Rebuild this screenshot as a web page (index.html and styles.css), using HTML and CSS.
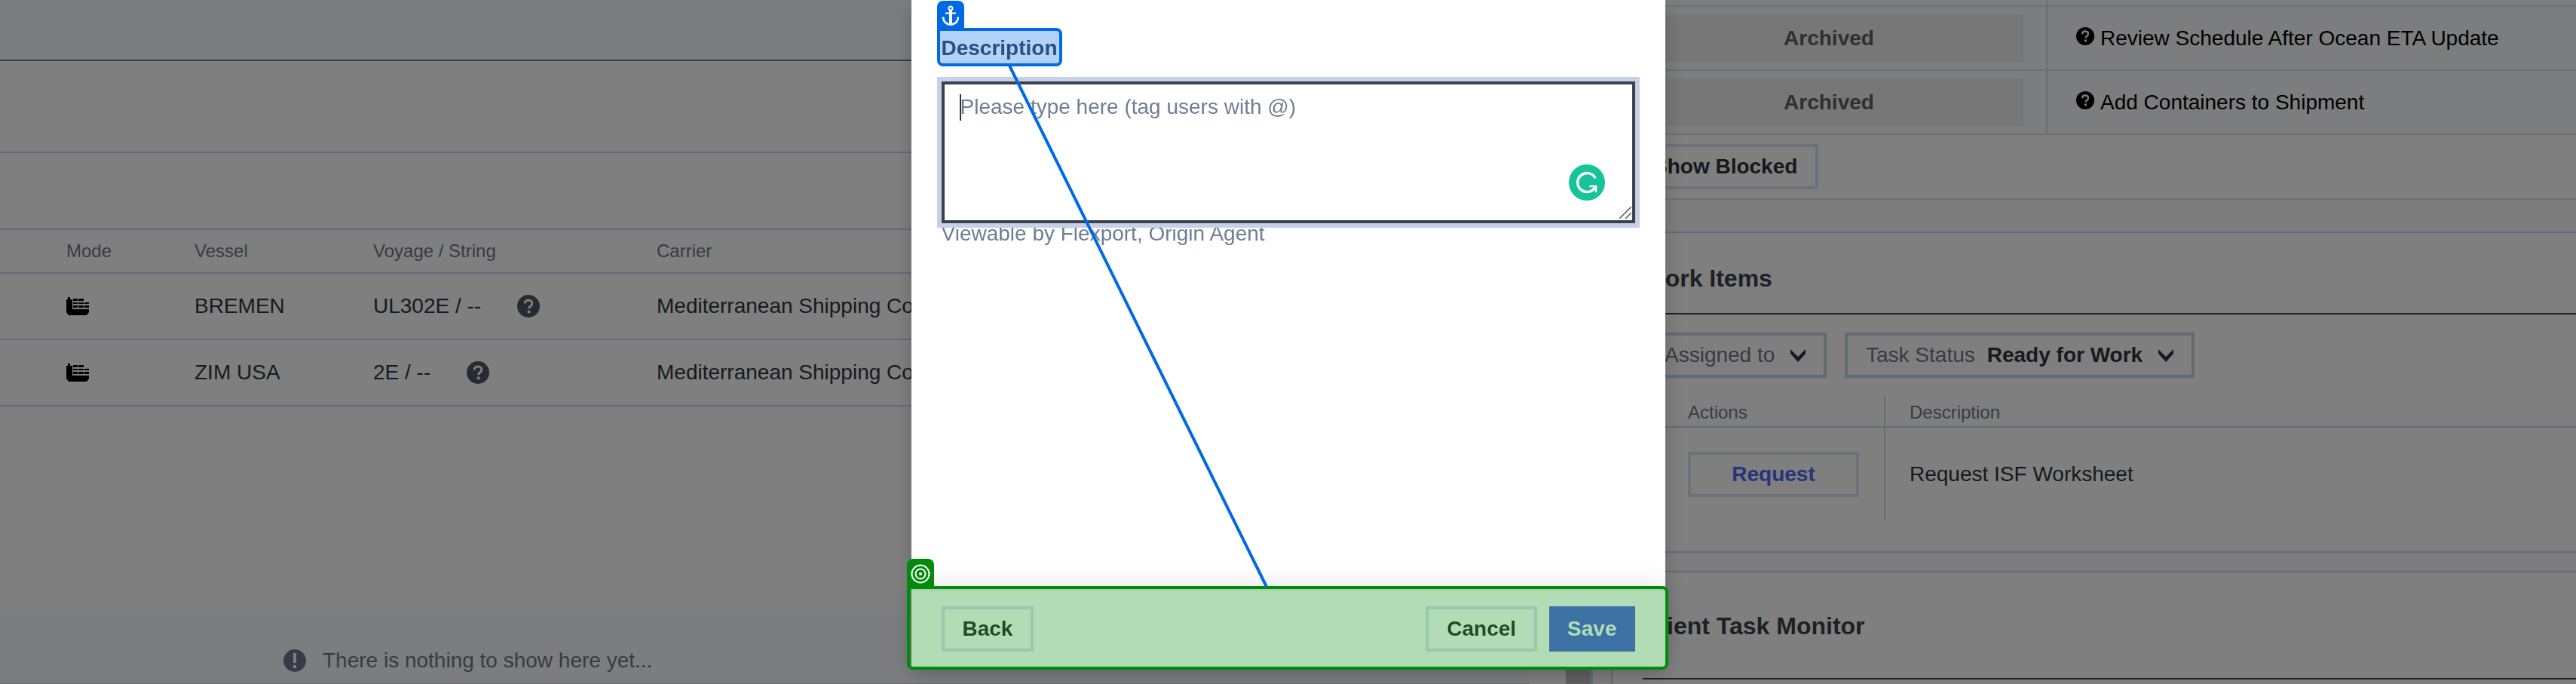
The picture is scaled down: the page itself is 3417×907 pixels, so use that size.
FILE: index.html
```html
<!DOCTYPE html>
<html lang="en">
<head>
<meta charset="utf-8">
<title>Shipment</title>
<link rel="stylesheet" href="styles.css">
</head>
<body>
<svg class="defs" aria-hidden="true">
  <symbol id="help" viewBox="0 0 30 30">
    <circle cx="15" cy="15" r="15" fill="currentColor"/>
    <path d="M10.2 11.6c0-2.9 2-4.7 4.8-4.7s4.9 1.700 4.900 4.300c0 3.500-4.200 3.600-4.200 7" fill="none" stroke="#fff" stroke-width="3"/>
    <path d="M13.800 20.600h3.600v3.600h-3.600z" fill="#fff"/>
  </symbol>
  <symbol id="alert" viewBox="0 0 30 30">
    <circle cx="15" cy="15" r="15" fill="currentColor"/>
    <path d="M13 5h4v13h-4zM13 21h4v4h-4z" fill="#f8fafc"/>
  </symbol>
  <symbol id="ship" viewBox="0 0 30 24">
    <path d="M0 3h2V0h3v3h3v13h22v4l-3 4H3l-3-4z"/>
    <path d="M9 2h6v3h-6zM16 2h7v3h-7zM9 7h6v2h-6zM16 7h7v2h-7zM24 7h6v2h-6zM9 11h6v3h-6zM16 11h7v3h-7zM24 11h6v3h-6z"/>
  </symbol>
  <symbol id="chevron" viewBox="0 0 20 17">
    <path d="M0 4.500V0l10 10L20 0v6L10 17 0 6z" fill="currentColor"/>
  </symbol>
</svg>

<main class="page">
  <section class="shipment">
    <div class="content">
      <div class="summary"></div>
      <div class="toolbar"></div>
      <div class="subbar"></div>
      <table class="legs">
        <colgroup><col class="col-mode"><col class="col-vessel"><col class="col-voyage"><col></colgroup>
        <thead>
          <tr><th>Mode</th><th>Vessel</th><th>Voyage / String</th><th>Carrier</th></tr>
        </thead>
        <tbody>
          <tr>
            <td><svg class="ship" role="img" aria-label="Ocean"><use href="#ship"/></svg></td>
            <td>BREMEN</td>
            <td><span class="voyage">UL302E / -- <svg class="icon"><use href="#help"/></svg></span></td>
            <td>Mediterranean Shipping Company</td>
          </tr>
          <tr>
            <td><svg class="ship" role="img" aria-label="Ocean"><use href="#ship"/></svg></td>
            <td>ZIM USA</td>
            <td><span class="voyage">2E / -- <svg class="icon"><use href="#help"/></svg></span></td>
            <td>Mediterranean Shipping Company</td>
          </tr>
        </tbody>
      </table>
      <div class="empty"><svg class="icon"><use href="#alert"/></svg>There is nothing to show here yet...</div>
    </div>
    <div class="track"></div>
  </section>

  <aside class="side">
    <section class="panel tasks">
      <table class="archived">
        <colgroup><col class="col-state"><col></colgroup>
        <tbody>
          <tr class="cut"><td></td><td></td></tr>
          <tr><td><div class="pill">Archived</div></td><td><svg class="small-icon"><use href="#help"/></svg>Review Schedule After Ocean ETA Update</td></tr>
          <tr><td><div class="pill">Archived</div></td><td><svg class="small-icon"><use href="#help"/></svg>Add Containers to Shipment</td></tr>
        </tbody>
      </table>
      <div class="tasks-foot"><button class="btn" type="button">Show Blocked</button></div>
    </section>

    <section class="panel work">
      <h2 class="title">Work Items</h2>
      <div class="filters">
        <div class="filter">
          <select class="muted" aria-label="Assigned to"><option>Assigned to</option></select>
          <svg class="chevron"><use href="#chevron"/></svg>
        </div>
        <div class="filter">
          <label for="status">Task Status</label>
          <select id="status" class="strong"><option>Ready for Work</option></select>
          <svg class="chevron"><use href="#chevron"/></svg>
        </div>
      </div>
      <table class="items">
        <colgroup><col class="col-actions"><col></colgroup>
        <thead><tr><th>Actions</th><th>Description</th></tr></thead>
        <tbody><tr><td><button class="btn request" type="button">Request</button></td><td>Request ISF Worksheet</td></tr></tbody>
      </table>
    </section>

    <section class="panel monitor">
      <h2 class="title">Client Task Monitor</h2>
    </section>
  </aside>
</main>

<div class="backdrop">
  <div class="modal" role="dialog" aria-label="Description">
    <div class="modal-body">
      <div class="marked">
        <label class="field-label" for="description">Description</label>
        <div class="mark anchor">
          <span class="tab"><svg width="24" height="28" viewBox="0 0 24 28" fill="none" stroke="#fff"><circle cx="12" cy="4" r="2.500" stroke-width="2"/><path d="M12 6.500V26" stroke-width="4"/><path d="M5 10.500h14" stroke-width="2"/><path d="M2 15.500c0 6 4.500 10 10 10s10-4 10-10" stroke-width="2.500"/></svg></span>
        </div>
      </div>
      <div class="field">
        <textarea id="description" placeholder="Please type here (tag users with @)"></textarea>
        <span class="caret"></span>
        <svg class="grammar" viewBox="0 0 48 48"><circle cx="24" cy="24" r="24" fill="#17c39b"/><path d="M34.500 17A12.500 12.500 0 1 0 34.500 31" fill="none" stroke="#fff" stroke-width="3.400" stroke-linecap="round"/><path d="M28.500 29h7.500v7M36 29l-5 5.500" fill="none" stroke="#fff" stroke-width="2.600" stroke-linecap="round"/></svg>
        <svg class="grip" viewBox="0 0 16 16" fill="none" stroke="#555" stroke-width="1.500"><path d="M0 16 16 0M8 16l8-8"/></svg>
      </div>
      <p class="hint">Viewable by Flexport, Origin Agent</p>
    </div>
    <footer class="modal-foot">
      <button class="btn" type="button">Back</button>
      <div class="actions">
        <button class="btn" type="button">Cancel</button>
        <button class="btn primary" type="button">Save</button>
      </div>
      <div class="mark target">
        <span class="tab"><svg width="26" height="26" viewBox="0 0 26 26" fill="none" stroke="#fff" stroke-width="2"><circle cx="13" cy="13" r="11.500"/><circle cx="13" cy="13" r="6.500"/><circle cx="13" cy="13" r="2" fill="#fff" stroke="none"/></svg></span>
      </div>
    </footer>
    <svg class="link" width="1000" height="884" viewBox="0 0 1000 884"><path d="M130 87 471 778" stroke="#006ae4" stroke-width="4"/></svg>
  </div>
</div>
</body>
</html>
```
FILE: styles.css
```css
* { box-sizing: border-box; }
body {
  margin: 0;
  height: 100vh;
  overflow: hidden;
  background: #fafafa;
  color: #2e3440;
  font: 28px/40px "Liberation Sans", Arial, sans-serif;
}
button, select, textarea { font: inherit; color: inherit; }
svg { display: block; flex: none; }
table { width: 100%; border-spacing: 0; table-layout: fixed; }
th, td { padding: 0; text-align: left; }
th { font-size: 24px; font-weight: 400; line-height: 32px; color: #6c788c; }
.defs { position: absolute; width: 0; height: 0; }

.page {
  display: grid;
  grid-template-columns: minmax(0, 1fr) 1280px;
  gap: 24px;
  height: 100vh;
  overflow: hidden;
}
.shipment { display: flex; background: #fff; border-right: 4px solid #ccd4e8; }
.content { flex: 1; display: flex; flex-direction: column; }
.track { width: 32px; margin-left: 48px; background: #c0c0c0; }
.summary { height: 81px; background: #f8fafc; border-bottom: 2px solid #6c788c; }
.toolbar { height: 122px; border-bottom: 2px solid #ccd4e8; }
.subbar { height: 102px; border-bottom: 2px solid #ccd4e8; }
.legs { white-space: nowrap; margin-bottom: 278px; }
.legs th { height: 58px; border-bottom: 2px solid #ccd4e8; }
.legs td { height: 88px; border-bottom: 2px solid #ccd4e8; }
.legs th:first-child, .legs td:first-child { padding-left: 88px; }
.col-mode { width: 258px; }
.col-vessel { width: 237px; }
.col-voyage { width: 376px; }
.ship { width: 30px; height: 24px; fill: #000; }
.icon { width: 30px; height: 30px; color: #4b5566; }
.voyage { display: flex; align-items: center; gap: 48px; }
.empty {
  flex: 1;
  display: flex;
  align-items: center;
  gap: 22px;
  padding: 28px 0 0 376px;
  background: #f8fafc;
  border-bottom: 1px solid #ccd4e8;
  color: #6c788c;
}
.empty .icon { color: #6c788c; }

.side { overflow: hidden; }
.panel { background: #fff; border: 2px solid #ccd4e8; border-right: 0; }
.tasks { border-top: 0; border-bottom-color: #dedede; margin-bottom: 42px; }
.archived { background: #f8fafc; color: #000; }
.archived td { height: 85px; border-bottom: 2px solid #dedede; }
.archived .cut td { height: 9px; }
.archived td:first-child { padding: 10px 30px 10px 29px; border-right: 2px solid #dedede; }
.archived .cut td:first-child { padding: 0; }
.archived td + td { padding-left: 38px; }
.col-state { width: 577px; }
.pill {
  height: 63px;
  background: #eee;
  color: #606060;
  font-weight: 700;
  line-height: 63px;
  text-align: center;
}
.small-icon { display: inline-block; width: 24px; height: 24px; margin-right: 8px; color: #000; }
.tasks-foot { padding: 12px 26px; }
.btn {
  display: block;
  height: 60px;
  padding: 0 24px;
  border: 4px solid #dae3f5;
  background: #fff;
  color: #2b3239;
  font-weight: 700;
}
.tasks-foot .btn { background: none; }

.work { margin-bottom: 24px; padding-bottom: 40px; }
.title {
  margin: 0 0 0 40px;
  padding: 40px 0 26px;
  border-bottom: 2px solid #3a424d;
  color: #3a424d;
  font-size: 32px;
  line-height: 40px;
}
.filters { display: flex; gap: 24px; padding: 24px 0 24px 41px; }
.filter {
  display: flex;
  align-items: center;
  height: 60px;
  padding: 0 24px;
  border: 4px solid #c6d4e6;
}
.filter label, .muted { color: #6c788c; }
.filter label { margin-right: 16px; }
.filter select { appearance: none; padding: 0; border: 0; background: none; }
.filter .strong { font-weight: 700; }
.chevron { width: 20px; height: 17px; margin-left: 20px; color: #2e3440; }
.items { margin-left: 40px; }
.items th { height: 42px; padding-top: 4px; border-bottom: 2px solid #ccd4e8; }
.items td { height: 124px; }
.items th:first-child, .items td:first-child { padding-left: 60px; border-right: 2px solid #ccd4e8; }
.items td:first-child { padding-right: 33px; }
.items th + th, .items td + td { padding-left: 32px; }
.col-actions { width: 322px; }
.request { width: 100%; color: #5566f0; }
.monitor { height: 200px; }
.monitor .title { padding: 51px 0 49px; }

.backdrop {
  position: fixed;
  inset: 0;
  display: flex;
  justify-content: center;
  padding-bottom: 23px;
  background: rgba(0, 0, 0, .5);
}
.modal {
  position: relative;
  display: flex;
  flex-direction: column;
  width: 1000px;
  background: #fff;
  box-shadow: 0 8px 24px rgba(0, 0, 0, .2);
}
.modal-body { flex: 1; padding: 44px 40px 0; }
.marked { position: relative; width: fit-content; margin-bottom: 24px; }
.field-label { display: block; color: #3a4655; font-weight: 700; }
.field { position: relative; z-index: 1; }
.field textarea {
  display: block;
  width: 100%;
  height: 188px;
  padding: 10px 21px;
  border: 4px solid #3a424d;
  border-radius: 0;
  outline: 6px solid #c6d1e8;
  resize: none;
}
.field textarea::placeholder { color: #6f7d95; opacity: 1; }
.caret { position: absolute; left: 24px; top: 17px; width: 2px; height: 35px; background: #2e3440; }
.grammar { position: absolute; right: 40px; top: 110px; width: 48px; height: 48px; }
.grip { position: absolute; right: 5px; bottom: 6px; width: 16px; height: 16px; }
.hint { margin: 0; color: #6f7d95; line-height: 28px; }
.modal-foot {
  position: relative;
  display: flex;
  justify-content: space-between;
  padding: 20px 40px;
  background: #fff;
  border-top: 4px solid #f0f2f5;
  box-shadow: 0 0 40px rgba(0, 0, 0, .12);
}
.actions { display: flex; gap: 16px; }
.primary { border: 0; background: #5768e6; color: #fff; }

.mark { position: absolute; border: 4px solid; border-radius: 8px; }
.anchor { inset: -7px -6px -4px; border-color: #006ae4; background: rgba(0, 106, 228, .3); border-top-left-radius: 0; }
.target { inset: -7px -4px -4px -6px; border-color: #008c0a; background: rgba(0, 140, 10, .3); border-top-left-radius: 0; }
.tab {
  position: absolute;
  left: -4px;
  bottom: 100%;
  display: flex;
  align-items: center;
  justify-content: center;
  width: 36px;
  height: 40px;
  border-radius: 8px 8px 0 0;
}
.anchor .tab { background: #006ae4; }
.target .tab { background: #008c0a; }
.link { position: absolute; left: 0; top: 0; z-index: 2; pointer-events: none; }
```
